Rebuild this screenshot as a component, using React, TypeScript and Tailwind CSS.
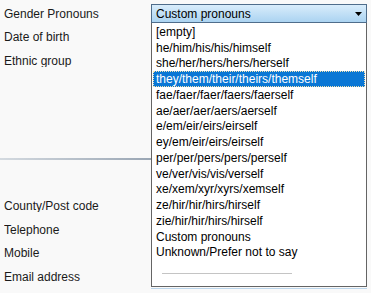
const PRONOUNS = [
  "[empty]",
  "he/him/his/his/himself",
  "she/her/hers/hers/herself",
  "they/them/their/theirs/themself",
  "fae/faer/faer/faers/faerself",
  "ae/aer/aer/aers/aerself",
  "e/em/eir/eirs/eirself",
  "ey/em/eir/eirs/eirself",
  "per/per/pers/pers/perself",
  "ve/ver/vis/vis/verself",
  "xe/xem/xyr/xyrs/xemself",
  "ze/hir/hir/hirs/hirself",
  "zie/hir/hir/hirs/hirself",
  "Custom pronouns",
  "Unknown/Prefer not to say",
];

const ACTIVE = 3;

function Row({ label, children }: { label: string; children?: React.ReactNode }) {
  return (
    <div className="h-[23.5px] flex items-center pl-[4px]">
      <div className="w-[147px] shrink-0 truncate">{label}</div>
      {children}
    </div>
  );
}

function PronounSelect() {
  return (
    <div className="w-[216px] h-[19px] shrink-0 flex items-center justify-between border border-[#4f6d8b] bg-gradient-to-b from-[#d9edfb] to-[#abd3f1] pl-[4px] pr-[3px] text-black">
      <span>Custom pronouns</span>
      <svg width="7" height="4" viewBox="0 0 7 4" className="mr-[1px]">
        <polygon points="0,0 7,0 3.5,4" fill="#000" />
      </svg>
    </div>
  );
}

function PronounList() {
  return (
    <div className="absolute left-[151px] top-[23px] w-[216px]">
      <div className="h-[264px] bg-white border border-t-0 border-[#646464] flex flex-col pt-[1px]">
        {PRONOUNS.map((item, index) => (
          <div
            key={item}
            className={
              index === ACTIVE
                ? "h-[15.75px] mx-[1px] px-[2px] flex items-center border border-dotted border-[#f2e2b0] bg-[#0a77d5] text-white whitespace-nowrap"
                : "h-[15.75px] mx-[1px] px-[2px] flex items-center border border-transparent text-black whitespace-nowrap"
            }
          >
            {item}
          </div>
        ))}
        <div className="ml-[10px] mt-[12.5px] w-[130px] h-px bg-[#c4c4c4]" />
      </div>
      <div className="mt-[1px] h-px bg-[#bcd6ec]" />
    </div>
  );
}

export default function App() {
  return (
    <div className="relative w-[371px] h-[293px] overflow-hidden bg-[#f9f9f9] text-[12px] leading-none text-[#1a1a1a] font-['Liberation_Sans',Arial,sans-serif]">
      <div className="flex flex-col pt-[2px]">
        <Row label="Gender Pronouns">
          <PronounSelect />
        </Row>
        <Row label="Date of birth" />
        <Row label="Ethnic group" />
        <div className="mt-[85.5px] w-[151px] h-[2px] bg-gradient-to-r from-[#d4dae0] to-[#9aa6b4]" />
        <div className="mt-[34.25px] flex flex-col">
          <Row label="County/Post code" />
          <Row label="Telephone" />
          <Row label="Mobile" />
          <Row label="Email address" />
        </div>
      </div>
      <PronounList />
    </div>
  );
}
